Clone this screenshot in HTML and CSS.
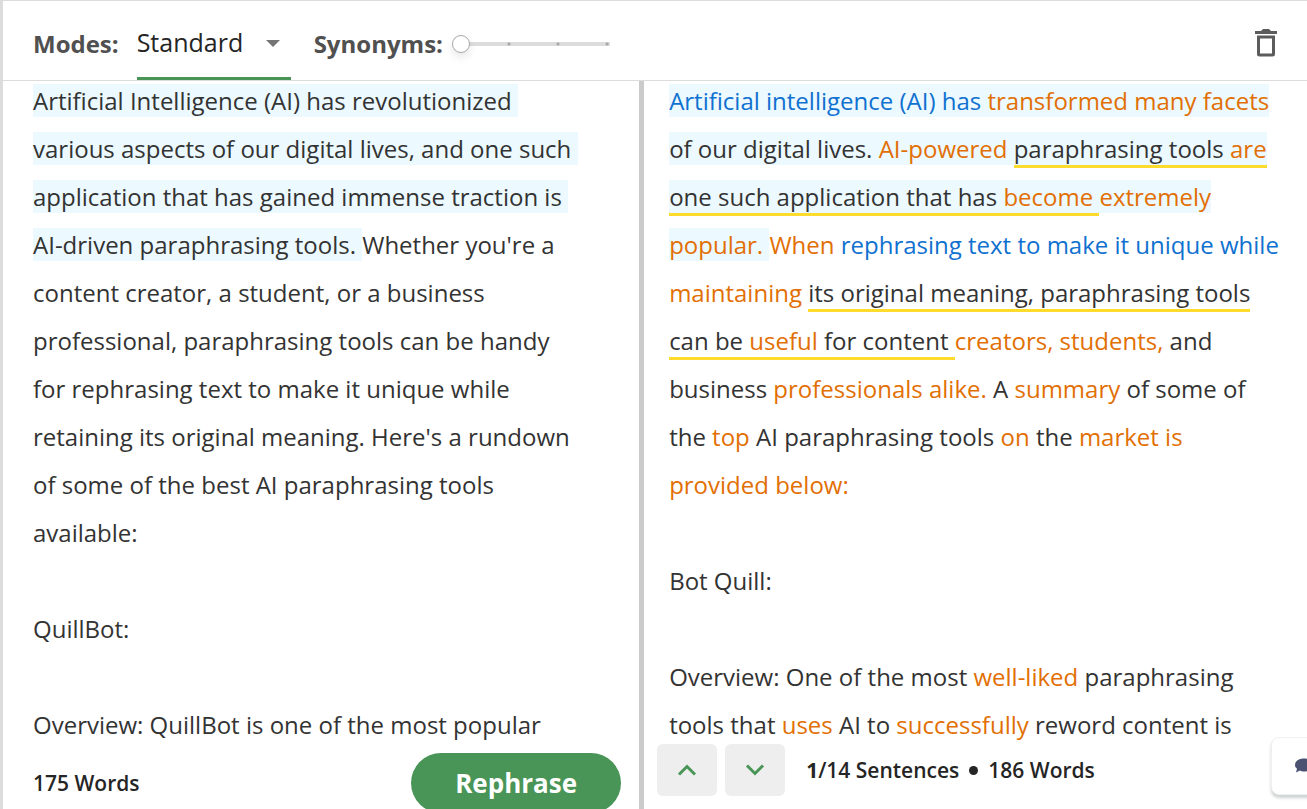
FILE: index.html
```html
<!DOCTYPE html>
<html lang="en">
<head>
    <meta charset="UTF-8">
    <meta name="viewport" content="width=device-width, initial-scale=1.0">
    <title>Paraphraser</title>
    <link rel="stylesheet" href="styles.css">
</head>
<body>
    <div class="app">
        <header class="toolbar">
            <label class="toolbar-label" for="mode">Modes:</label>
            <div class="mode-select">
                <select id="mode" name="mode">
                    <option selected>Standard</option>
                    <option>Fluency</option>
                </select>
            </div>
            <label class="toolbar-label" for="synonyms">Synonyms:</label>
            <input class="synonyms-slider" type="range" id="synonyms" name="synonyms" min="0" max="3" step="1" value="0">
            <button class="btn-delete" type="button" aria-label="Clear text">
                <svg width="24" height="30" viewBox="0 0 24 30">
                    <path fill="#5c5c5c" fill-rule="evenodd" d="M1 3H7L9 1H15L17 3H23V6H1ZM3 7.500H21V26Q21 28.500 18.500 28.500H5.500Q3 28.500 3 26ZM6 10.500V25.500H18V10.500Z"/>
                </svg>
            </button>
        </header>

        <main class="panes">
            <section class="pane pane-input">
                <div class="text text-input"><span class="active">Artificial Intelligence (AI) has revolutionized various aspects of our digital lives, and one such application that has gained immense traction is AI-driven paraphrasing tools. </span>Whether you're a content creator, a student, or a business professional, paraphrasing tools can be handy for rephrasing text to make it unique while retaining its original meaning. Here's a rundown of some of the best AI paraphrasing tools available:

QuillBot:

Overview: QuillBot is one of the most popular</div>
                <div class="footer footer-input">
                    <span class="count">175 Words</span>
                    <button class="btn-rephrase" type="button">Rephrase</button>
                </div>
            </section>

            <section class="pane pane-output">
                <div class="text text-output">
                    <p><span class="active"><span class="same">Artificial intelligence (AI) has</span> <span class="changed">transformed many facets</span> of our digital lives. <span class="changed">AI-powered</span> <span class="moved">paraphrasing tools <span class="changed">are</span> one such application that has <span class="changed">become </span></span><span class="changed">extremely popular. </span></span><span class="changed">When</span> <span class="same">rephrasing text to make it unique while</span> <span class="changed">maintaining</span> <span class="moved">its original meaning, paraphrasing tools can be <span class="changed">useful</span> for content </span><span class="changed">creators, students,</span> and business <span class="changed">professionals alike.</span> A <span class="changed">summary</span> of some of the <span class="changed">top</span> AI paraphrasing tools <span class="changed">on</span> the <span class="changed">market is</span> <span class="changed">provided below:</span></p>
                    <p>Bot Quill:</p>
                    <p>Overview: One of the most <span class="changed">well-liked</span> paraphrasing tools that <span class="changed">uses</span> AI to <span class="changed">successfully</span> reword content is</p>
                </div>
                <div class="footer footer-output">
                    <button class="btn-step" type="button" aria-label="Previous sentence">
                        <svg width="20" height="12" viewBox="0 0 20 12"><path d="M2 10.500L10 2.500L18 10.500" fill="none" stroke="#499557" stroke-width="3"/></svg>
                    </button>
                    <button class="btn-step" type="button" aria-label="Next sentence">
                        <svg width="20" height="12" viewBox="0 0 20 12"><path d="M2 1.500L10 9.500L18 1.500" fill="none" stroke="#499557" stroke-width="3"/></svg>
                    </button>
                    <span class="count count-output"><span><b>1</b>/14 Sentences</span><i class="dot"></i><span>186 Words</span></span>
                </div>
            </section>
        </main>

        <button class="btn-chat" type="button" aria-label="Chat">
            <svg width="20" height="16" viewBox="0 0 20 16">
                <path fill="#4c5372" d="M9 0.500C14 0.500 18 3 18 7C18 11 14 13.500 9 13.500C7.500 13.500 6 13.200 5 12.500L1 14.500L2 10.800C0.500 9.500 0 8.500 0 7C0 3 4 0.500 9 0.500Z"/>
            </svg>
        </button>
    </div>
</body>
</html>
```

FILE: styles.css
```css
* {
    box-sizing: border-box;
}

body {
    margin: 0;
    font-family: "Open Sans", "Noto Sans", sans-serif;
    font-size: 24px;
    color: #252525;
    background-color: #fff;
}

button, select {
    font-family: inherit;
    border: none;
    padding: 0;
    cursor: pointer;
}

.app {
    position: relative;
    display: flex;
    flex-direction: column;
    height: 100vh;
    border-top: 1px solid #dcdcdc;
    border-left: 3px solid #dcdcdc;
    overflow: hidden;
}

/* toolbar */
.toolbar {
    display: flex;
    align-items: center;
    flex-shrink: 0;
    height: 80px;
    padding: 0 29px 0 30px;
    border-bottom: 1px solid #dcdcdc;
}

.toolbar-label {
    font-weight: 700;
    color: #505050;
    padding-top: 6px;
}

.mode-select {
    position: relative;
    align-self: stretch;
    width: 154px;
    margin: 0 23px 0 18px;
    border-bottom: 3px solid #499557;
}

.mode-select select {
    appearance: none;
    width: 100%;
    height: 100%;
    padding-top: 6px;
    font-size: 25px;
    font-weight: 500;
    color: #252525;
    background: transparent;
}

.mode-select::after {
    content: "";
    position: absolute;
    top: 39px;
    right: 11px;
    border: 7px solid transparent;
    border-top-color: #757575;
    border-bottom: none;
    pointer-events: none;
}

.synonyms-slider {
    appearance: none;
    width: 164px;
    height: 18px;
    margin: 6px 0 0 9px;
    background:
        radial-gradient(circle, #a8a8a8 1px, transparent 2px) 55px center / 4px 4px no-repeat,
        radial-gradient(circle, #a8a8a8 1px, transparent 2px) 104px center / 4px 4px no-repeat,
        radial-gradient(circle, #a8a8a8 1px, transparent 2px) 153px center / 4px 4px no-repeat,
        linear-gradient(#dcdcdc, #dcdcdc) 9px center / 149px 4px no-repeat;
}

.synonyms-slider::-webkit-slider-thumb {
    appearance: none;
    width: 18px;
    height: 18px;
    border: 1px solid #a8a8a8;
    border-radius: 50%;
    background-color: #fff;
    box-shadow: 0 4px 8px rgba(0, 0, 0, 0.1);
}

.btn-delete {
    display: flex;
    margin-left: auto;
    margin-top: 4px;
    background: transparent;
}

/* panes */
.panes {
    display: grid;
    grid-template-columns: 59fr 61fr;
    flex: 1;
    min-height: 0;
}

.pane {
    display: flex;
    flex-direction: column;
    min-width: 0;
    min-height: 0;
}

.pane-input {
    border-right: 5px solid #cbcbcb;
}

.text {
    flex: 1;
    min-height: 0;
    margin-top: -4px;
    line-height: 48px;
    color: #333;
}

.text p {
    margin: 0 0 48px;
}

.text-input {
    padding: 0 54px 0 30px;
    white-space: pre-wrap;
}

.text-output {
    padding: 0 26px 0 25px;
}

.active {
    background-color: #ecf9ff;
}

.changed {
    color: #e26f04;
}

.same {
    color: #1071d0;
}

.moved {
    border-bottom: 3px solid #ffdb2d;
}

/* footers */
.footer {
    display: flex;
    align-items: center;
    flex-shrink: 0;
}

.footer-input {
    justify-content: space-between;
    height: 56px;
    padding: 4px 18px 0 30px;
}

.count {
    font-size: 21px;
    font-weight: 600;
}

.count b {
    font-weight: 700;
}

.btn-rephrase {
    flex-shrink: 0;
    width: 210px;
    height: 60px;
    border-radius: 30px;
    font-size: 26px;
    font-weight: 700;
    color: #fff;
    background-color: #499557;
}

.footer-output {
    gap: 8px;
    height: 65px;
    padding: 0 13px 13px;
}

.btn-step {
    display: flex;
    align-items: center;
    justify-content: center;
    width: 60px;
    height: 52px;
    border-radius: 6px;
    background-color: #eee;
}

.count-output {
    display: flex;
    align-items: center;
    gap: 10px;
    margin-left: 13px;
}

.dot {
    width: 9px;
    height: 9px;
    border-radius: 50%;
    background-color: #252525;
}

/* chat bubble, runs off the right edge */
.btn-chat {
    position: absolute;
    right: -25px;
    bottom: 14px;
    display: flex;
    align-items: center;
    width: 61px;
    height: 58px;
    padding-left: 23px;
    border: 1px solid #f0f0f0;
    border-radius: 8px;
    background-color: #fff;
    box-shadow: 0 3px 3px rgba(60, 80, 80, 0.25);
}
```
